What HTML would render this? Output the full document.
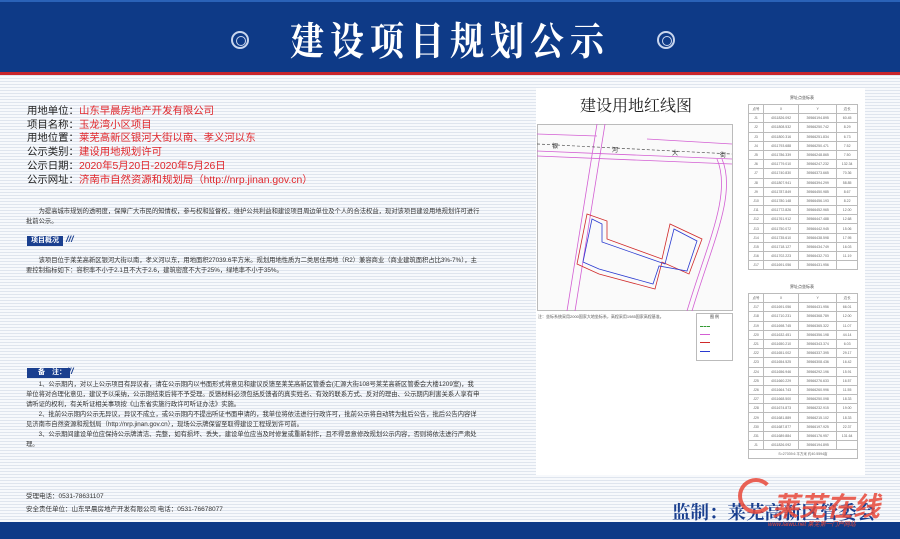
<!DOCTYPE html>
<html><head><meta charset="utf-8"><style>
*{margin:0;padding:0;box-sizing:border-box}
body{width:900px;height:539px;overflow:hidden;position:relative;font-family:"Liberation Sans","Noto Sans CJK SC",sans-serif;background:repeating-linear-gradient(#dfe5ee 0 1px,#f7f9fc 1px 3px)}
.hdr{position:absolute;left:0;top:0;width:900px;height:72px;background:#0e3a87;border-top:2px solid #2a62b8}
.red{position:absolute;left:0;top:72px;width:900px;height:3px;background:#c8252b}
.t{position:absolute;top:14px;left:0;width:900px;text-align:center;color:#fff;font:bold 34px "Noto Serif CJK SC",serif;letter-spacing:6px;transform:scaleY(1.15)}
.ring{position:absolute;top:31px;width:18px;height:18px;border:2px solid #c9d6ee;border-radius:50%}
.ring:after{content:"";position:absolute;left:3px;top:3px;width:8px;height:8px;border:1.5px solid #c9d6ee;border-radius:50%}
.info{position:absolute;left:27px;top:105px;font-size:10.4px;line-height:13.7px;color:#222}
.info span{color:#e0262b}
.p{position:absolute;left:26px;font-size:6.3px;line-height:10px;color:#333;width:454px}
.badge{position:absolute;left:27px;background:#1a3f8f;color:#fff;font-size:7px;font-weight:bold;padding:1px 4px;height:10px;line-height:8px}
.slash{position:absolute;color:#1a3f8f;font-weight:bold;font-size:9px;font-style:italic}
.panel{position:absolute;left:536px;top:88px;width:329px;height:387px;background:#fff}
.foot{position:absolute;left:0;top:522px;width:900px;height:17px;background:#0e3a87}
table{border-collapse:collapse;position:absolute;font-size:3.5px;color:#666}
td{border:1px solid #bbb;height:9.2px;padding:0 1px;text-align:center}
</style></head><body>
<div class="hdr"></div><div class="red"></div>
<div class="ring" style="left:231px"></div><div class="ring" style="left:657px"></div>
<div class="t">建设项目规划公示</div>
<div class="info">用地单位：<span>山东早晨房地产开发有限公司</span><br>项目名称：<span>玉龙湾小区项目</span><br>用地位置：<span>莱芜高新区银河大街以南、孝义河以东</span><br>公示类别：<span>建设用地规划许可</span><br>公示日期：<span>2020年5月20日-2020年5月26日</span><br>公示网址：<span>济南市自然资源和规划局（http://nrp.jinan.gov.cn）</span></div>
<div class="p" style="top:207px">　　为提高城市规划的透明度，保障广大市民的知情权，参与权和监督权，维护公共利益和建设项目周边单位及个人的合法权益，现对该项目建设用地规划许可进行批前公示。</div>
<div class="badge" style="top:236px">项目概况</div><div class="slash" style="left:66px;top:234px">///</div>
<div class="p" style="top:256px">　　该项目位于莱芜高新区银河大街以南，孝义河以东，用地面积27039.6平方米。规划用地性质为二类居住用地（R2）兼容商业（商业建筑面积占比3%-7%），主要控制指标如下：容积率不小于2.1且不大于2.6，建筑密度不大于25%，绿地率不小于35%。</div>
<div class="badge" style="top:368px">　备　注：</div><div class="slash" style="left:66px;top:366px">///</div>
<div class="p" style="top:380px">　　1、公示期内，对以上公示项目有异议者，请在公示期内以书面形式将意见和建议反馈至莱芜高新区管委会(汇源大街108号莱芜高新区管委会大楼1209室)，我单位将对合理化意见，建议予以采纳，公示期结束后将不予受理。反馈材料必须包括反馈者的真实姓名、有效的联系方式、反对的理由、公示期内利害关系人享有申请听证的权利，有关听证相关事项按《山东省实施行政许可听证办法》实施。<br>　　2、批前公示期内公示无异议，异议不成立，或公示期内不提出听证书面申请的，我单位将依法进行行政许可，批前公示将自动转为批后公告，批后公告内容详见济南市自然资源和规划局（http://nrp.jinan.gov.cn），现场公示牌保留至取得建设工程规划许可前。<br>　　3、公示期间建设单位应保持公示牌清洁、完整，如有损坏、丢失，建设单位应当及时修复或重新制作，且不得恶意修改规划公示内容，否则将依法进行严肃处理。</div>
<div class="p" style="top:490px;font-size:6.5px;line-height:13px">受理电话：0531-78631107<br>安全责任单位：山东早晨房地产开发有限公司 电话：0531-76678077</div>
<div class="panel"></div>
<div style="position:absolute;left:580px;top:93px;font:16px 'Noto Serif CJK SC',serif;color:#222">建设用地红线图</div>
<svg style="position:absolute;left:537px;top:124px" width="196" height="187">
<rect x="0.5" y="0.5" width="195" height="186" fill="#fafafa" stroke="#bbb"/>
<path d="M0 10 L60 12 M0 27 L195 35 M60 0 L30 187 M68 0 L38 187 M110 15 L195 20 M0 32 L195 40" stroke="#d35fd3" fill="none" stroke-width="0.8"/>
<path d="M0 20 L195 30" stroke="#555" stroke-dasharray="3 2" fill="none" stroke-width="0.7"/>
<path d="M180 35 C195 70 170 120 150 187 M185 35 C200 70 175 120 155 187" stroke="#d35fd3" fill="none" stroke-width="0.8"/>
<path d="M50 90 L70 97 L70 115 L125 135 L133 100 L165 115 L152 150 L125 138 L118 165 L62 150 L40 140 Z" stroke="#d02a2a" fill="none" stroke-width="0.8"/>
<path d="M55 95 L65 100 L65 118 L128 140 L137 105 L160 117 L150 147 L122 142 L116 160 L62 145 L46 138 Z" stroke="#2a3ad0" fill="none" stroke-width="0.8"/>
<text x="15" y="24" font-size="6" fill="#333">银</text><text x="75" y="28" font-size="6" fill="#333">河</text><text x="135" y="31" font-size="6" fill="#333">大</text><text x="183" y="33" font-size="6" fill="#333">街</text>
</svg>
<div style="position:absolute;left:538px;top:314px;font-size:4px;color:#555">注：坐标系统采用2000国家大地坐标系，高程采用1985国家高程基准。</div>
<div style="position:absolute;left:696px;top:313px;width:37px;height:48px;border:1px solid #bbb;background:#fff;font-size:4px;color:#333;text-align:center">图 例</div>
<div style="position:absolute;left:700px;top:326px;width:10px;border-top:1px dashed #393"></div>
<div style="position:absolute;left:700px;top:334px;width:10px;border-top:1px solid #d35fd3"></div>
<div style="position:absolute;left:700px;top:342px;width:10px;border-top:1px solid #d02a2a"></div>
<div style="position:absolute;left:700px;top:351px;width:10px;border-top:1px solid #2a3ad0"></div>
<div style="position:absolute;left:790px;top:95px;font-size:4px;color:#444">界址点坐标表</div>
<div style="position:absolute;left:790px;top:284px;font-size:4px;color:#444">界址点坐标表</div>
<table style="left:748px;top:104px;width:110px"><tr><td>点号</td><td>X</td><td>Y</td><td>边长</td></tr>
<tr><td>J1</td><td>4011826.092</td><td>39566194.895</td><td>60.45</td></tr><tr><td>J2</td><td>4011808.532</td><td>39566250.742</td><td>8.29</td></tr><tr><td>J3</td><td>4011800.316</td><td>39566251.834</td><td>6.73</td></tr><tr><td>J4</td><td>4011793.688</td><td>39566250.471</td><td>7.52</td></tr><tr><td>J5</td><td>4011786.339</td><td>39566248.865</td><td>7.50</td></tr><tr><td>J6</td><td>4011779.010</td><td>39566247.232</td><td>132.34</td></tr><tr><td>J7</td><td>4011740.830</td><td>39566373.665</td><td>70.36</td></tr><tr><td>J8</td><td>4011807.941</td><td>39566394.299</td><td>58.85</td></tr><tr><td>J9</td><td>4011787.849</td><td>39566450.985</td><td>8.67</td></tr><tr><td>J10</td><td>4011780.148</td><td>39566456.193</td><td>8.22</td></tr><tr><td>J11</td><td>4011772.826</td><td>39566452.965</td><td>12.00</td></tr><tr><td>J12</td><td>4011761.912</td><td>39566447.488</td><td>12.68</td></tr><tr><td>J13</td><td>4011750.072</td><td>39566442.945</td><td>15.06</td></tr><tr><td>J14</td><td>4011735.610</td><td>39566438.598</td><td>17.95</td></tr><tr><td>J15</td><td>4011718.127</td><td>39566434.749</td><td>16.03</td></tr><tr><td>J16</td><td>4011702.223</td><td>39566432.703</td><td>11.19</td></tr><tr><td>J17</td><td>4011691.056</td><td>39566431.956</td><td></td></tr></table>
<table style="left:748px;top:293px;width:110px"><tr><td>点号</td><td>X</td><td>Y</td><td>边长</td></tr>
<tr><td>J17</td><td>4011691.056</td><td>39566431.956</td><td>66.01</td></tr><tr><td>J18</td><td>4011710.231</td><td>39566368.789</td><td>12.00</td></tr><tr><td>J19</td><td>4011698.745</td><td>39566365.322</td><td>11.07</td></tr><tr><td>J20</td><td>4011632.451</td><td>39566356.198</td><td>44.14</td></tr><tr><td>J21</td><td>4011650.210</td><td>39566343.374</td><td>6.03</td></tr><tr><td>J22</td><td>4011651.002</td><td>39566337.395</td><td>29.17</td></tr><tr><td>J23</td><td>4011654.525</td><td>39566308.436</td><td>16.42</td></tr><tr><td>J24</td><td>4011656.946</td><td>39566292.196</td><td>15.91</td></tr><tr><td>J25</td><td>4011660.229</td><td>39566276.633</td><td>16.57</td></tr><tr><td>J26</td><td>4011664.743</td><td>39566260.996</td><td>11.55</td></tr><tr><td>J27</td><td>4011668.500</td><td>39566250.098</td><td>18.33</td></tr><tr><td>J28</td><td>4011674.873</td><td>39566232.915</td><td>19.00</td></tr><tr><td>J29</td><td>4011681.889</td><td>39566215.102</td><td>18.33</td></tr><tr><td>J30</td><td>4011687.877</td><td>39566197.925</td><td>22.37</td></tr><tr><td>J31</td><td>4011689.884</td><td>39566176.957</td><td>131.64</td></tr><tr><td>J1</td><td>4011826.092</td><td>39566194.895</td><td></td></tr><tr><td colspan="4">S=27039.6 平方米 约40.5594亩</td></tr></table>
<div class="foot"></div>
<div style="position:absolute;left:672px;top:499px;font:bold 18.5px 'Noto Serif CJK SC',serif;color:#1a3f8f;white-space:nowrap">监制：莱芜高新区管委会</div>
<div style="position:absolute;left:772px;top:485px;font:italic bold 27px 'Noto Sans CJK SC',sans-serif;color:#e8483a;opacity:.85;white-space:nowrap">莱芜在线</div>
<div style="position:absolute;left:738px;top:478px;width:36px;height:36px;border:4px solid #e8483a;border-radius:50%;border-right-color:transparent;opacity:.85"></div>
<div style="position:absolute;left:768px;top:519px;font-size:6px;color:#e8483a;font-style:italic">www.laiwu.net 莱芜第一门户网站</div>
</body></html>
